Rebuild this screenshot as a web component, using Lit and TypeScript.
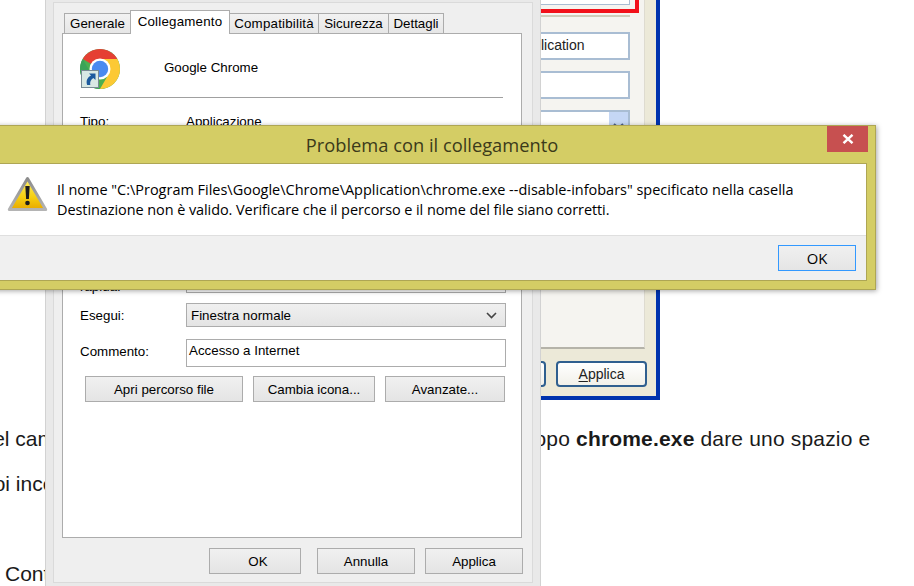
import { LitElement, html, css } from "lit";
import { customElement } from "lit/decorators.js";

@customElement("app-root")
export class AppRoot extends LitElement {
  static styles = css`
    :host { display: block; position: relative; width: 914px; height: 586px; overflow: hidden; background: #fff; font-family: "Liberation Sans", Arial, sans-serif; color: #000; }
    * { box-sizing: border-box; }

    /* article text behind the windows */
    .article { position: absolute; left: 0; top: 0; width: 914px; height: 586px; font-size: 21px; color: #1a1a1a; white-space: nowrap; }
    .line { position: absolute; line-height: 24px; }
    .l1 { left: -22px; top: 427px; }
    .l1b { left: 534.5px; top: 427px; letter-spacing: 0.17px; }
    .l2 { left: -18px; top: 472px; }
    .l3 { left: 5px; top: 562px; }

    /* old XP-style window */
    .xp { position: absolute; left: 400px; top: -20px; width: 260px; height: 420px; background: #ece9d8; border-right: 4px solid #0033ad; border-bottom: 4px solid #0033ad; display: flex; flex-direction: column; align-items: flex-end; padding-right: 11px; }
    .xp-panel { width: 245px; height: 369px; background: #f5f4f0; border-right: 1px solid #dedbd0; border-bottom: 2px solid #b5b3a9; padding-right: 14px; display: flex; flex-direction: column; align-items: flex-end; position: relative; font-size: 14px; color: #222; }
    .xp-top { width: 100%; height: 25px; border: 1px solid #a9bdd3; border-top: 0; background: #fff; }
    .xp-red { position: absolute; right: 5px; top: 0; width: 130px; height: 33px; border-right: 4px solid #f2101a; border-bottom: 4px solid #f2101a; }
    .xp-sep { width: 100%; height: 2px; background: #cfccbb; margin-top: 10px; }
    .xp-field { width: 100%; height: 28px; border: 2px solid #a9bdd3; background: #fff; display: flex; align-items: center; flex: none; }
    .xp-f1 { margin-top: 15px; padding-left: 114px; padding-bottom: 2px; }
    .xp-f2 { margin-top: 11px; }
    .xp-f3 { margin-top: 11px; justify-content: flex-end; align-items: flex-start; }
    .xp-drop { width: 19px; height: 18px; background: #c5d7f5; display: flex; align-items: flex-end; justify-content: center; }
    .xp-row { width: 260px; display: flex; justify-content: flex-end; gap: 10px; margin-top: 12px; align-self: flex-end; margin-right: -2px; }
    .xp-btn { width: 91px; height: 26px; border: 2px solid #2f5f8f; border-radius: 4px; background: linear-gradient(#fff, #f2f1ea); font: 14px "Liberation Sans", Arial, sans-serif; color: #222; display: flex; align-items: center; justify-content: center; flex: none; }
    .xp-btn u { text-underline-offset: 2px; }

    /* properties window */
    .props { position: absolute; left: 45px; top: -6px; width: 496px; height: 600px; background: #e9e9e9; border-left: 1px solid #d2d2d2; border-right: 1px solid #d2d2d2; padding: 8px 7px; }
    .props-in { width: 480px; height: 581px; background: #efefef; border: 1px solid #dadada; padding: 7px 8px 0 8px; display: flex; flex-direction: column; font-size: 13.33px; }
    .tabs { display: flex; align-items: flex-end; height: 24px; padding-left: 2px; position: relative; z-index: 1; }
    .tab { height: 21px; border: 1px solid #acacac; background: linear-gradient(#f2f2f2, #e6e6e6); display: flex; align-items: center; justify-content: center; margin-right: -1px; }
    .tab.on { height: 24px; background: #fff; border-bottom: 0; padding-bottom: 3px; position: relative; }
    .t1 { width: 67px; } .t2 { width: 100px; letter-spacing: .2px; } .t3 { width: 90px; letter-spacing: .2px; } .t4 { width: 71px; } .t5 { width: 56px; }
    .panel { width: 460px; height: 505px; margin-top: -1px; background: #fff; border: 1px solid #acacac; padding: 15px 0 0 17px; flex: none; }
    .head { display: flex; align-items: center; gap: 44px; height: 40px; }
    .head svg { display: block; flex: none; }
    .head span { margin-top: -4px; }
    .sep { width: 423px; height: 1px; background: #a0a0a0; margin-top: 8px; }
    .row { display: flex; align-items: center; }
    .label { width: 106px; flex: none; }
    .r-tipo { margin-top: 15px; height: 16px; }
    .r-rap { margin-top: 139px; height: 25px; align-items: flex-end; }
    .r-rap .label { line-height: 16px; margin-bottom: -2px; }
    .r-ese { margin-top: 10px; height: 24px; }
    .r-com { margin-top: 12px; height: 28px; }
    .r-com .label { margin-top: -4px; }
    .input { width: 320px; height: 100%; border: 1px solid #acacac; background: #fff; }
    .input.com { padding: 3px 2px; line-height: 16px; }
    .select { width: 320px; height: 100%; border: 1px solid #acacac; background: linear-gradient(#f0f0f0, #e4e4e4); padding: 0 8px 0 4px; display: flex; align-items: center; justify-content: space-between; }
    .actions { display: flex; margin-top: 9px; margin-left: 5px; gap: 10px; }
    .btn { height: 26px; border: 1px solid #acacac; background: linear-gradient(#f0f0f0, #e4e4e4); display: flex; align-items: center; justify-content: center; flex: none; }
    .a1 { width: 158px; } .a2 { width: 122px; } .a3 { width: 120px; }
    .foot { display: flex; margin-top: 10px; margin-left: 147px; }
    .f1 { width: 92px; margin-right: 16px; padding-left: 6px; } .f2 { width: 98px; margin-right: 10px; } .f3 { width: 98px; }

    /* error dialog */
    .dlg { position: absolute; left: -10px; top: 125px; width: 886px; height: 165px; background: #d4cd65; border: 1px solid #aea654; box-shadow: 1px 1px 5px rgba(0,0,0,.35); padding: 0 8px 8px 0; display: flex; flex-direction: column; font-family: "Open Sans", "Noto Sans", sans-serif; }
    .title { height: 37px; flex: none; display: flex; align-items: center; justify-content: center; font-size: 18.3px; color: #3b3a1a; position: relative; }
    .title span { margin-left: 6px; }
    .close { position: absolute; right: -1px; top: 0; width: 41px; height: 26px; background: #c75050; display: flex; align-items: center; justify-content: center; }
    .client { flex: 1; border: 1px solid #aea654; border-left: 0; display: flex; flex-direction: column; background: #fff; }
    .msg { height: 71px; flex: none; background: #fff; display: flex; align-items: flex-start; padding: 12px 0 0 16px; gap: 9px; font-size: 14.48px; line-height: 20px; color: #000; }
    .msg svg { flex: none; margin-top: 0; }
    .msg-text { white-space: nowrap; padding-top: 4px; }
    .tight { letter-spacing: -0.07px; }
    .bar { flex: 1; background: #f0f0f0; border-top: 1px solid #dfdfdf; display: flex; justify-content: flex-end; align-items: flex-start; padding: 9px 10px 0 0; }
    .ok { width: 78px; height: 26px; border: 1px solid #3399ff; background: linear-gradient(#f0f0f0, #e5e5e5); display: flex; align-items: center; justify-content: center; font-size: 14.8px; }
  `;

  private chrome() {
    return html`<svg width="40" height="40" viewBox="0 0 40 40">
      <circle cx="20" cy="20" r="20" fill="#4caf50"/>
      <path d="M20 20 L2.7 10 A20 20 0 0 1 37.3 10 Z" fill="#e53f33"/>
      <path d="M37.3 10 L20 10 L28.7 25 L20 40 A20 20 0 0 0 37.3 10Z" fill="#fcc934"/>
      <path d="M2.7 10 L11.3 25 L20 40 A20 20 0 0 1 2.7 10Z" fill="#3ba358"/>
      <circle cx="20" cy="20" r="10.5" fill="#fff"/>
      <circle cx="20" cy="20" r="8.2" fill="#4a8af0"/>
      <rect x="1.5" y="21.5" width="17" height="17" fill="#d8e8e4" stroke="#788a94" stroke-width="1"/>
      <path d="M15.500 24.500 L15.500 31 L13.300 28.900 C10.500 30.800 9.800 33 10.300 36 L7.200 36 C5.600 32 7.500 28.300 11 26.600 L9 24.500 Z" fill="#1c5a9e"/>
    </svg>`;
  }

  private warning() {
    return html`<svg width="41" height="36" viewBox="0 0 41 36">
      <defs>
        <linearGradient id="wg" x1="0" y1="0" x2="0" y2="1">
          <stop offset="0" stop-color="#fdf06a"/><stop offset=".6" stop-color="#f6cf10"/><stop offset="1" stop-color="#e8a800"/>
        </linearGradient>
        <linearGradient id="ws" x1="0" y1="0" x2="0" y2="1">
          <stop offset="0" stop-color="#8c8c8c"/><stop offset="1" stop-color="#b4b4b4"/>
        </linearGradient>
      </defs>
      <path d="M20.500 2.500 L38.700 33.600 L2.300 33.600 Z" fill="url(#wg)" stroke="url(#ws)" stroke-width="3" stroke-linejoin="round"/>
      <path d="M18.300 10 L22.700 10 L21.900 23 L19.100 23 Z" fill="#1c1c1c"/>
      <circle cx="20.500" cy="27" r="2.300" fill="#1c1c1c"/>
    </svg>`;
  }

  render() {
    return html`
      <div class="article">
        <div class="line l1">Nel cam</div>
        <div class="line l1b">opo <b>chrome.exe</b> dare uno spazio e</div>
        <div class="line l2">poi inco</div>
        <div class="line l3">Cont</div>
      </div>

      <div class="xp">
        <div class="xp-panel">
          <div class="xp-top"></div>
          <div class="xp-red"></div>
          <div class="xp-sep"></div>
          <div class="xp-field xp-f1">Application</div>
          <div class="xp-field xp-f2"></div>
          <div class="xp-field xp-f3">
            <div class="xp-drop">
              <svg width="11" height="7" viewBox="0 0 11 7"><path d="M1 1 L5.500 5 L10 1" fill="none" stroke="#4d6185" stroke-width="2"/></svg>
            </div>
          </div>
        </div>
        <div class="xp-row">
          <div class="xp-btn"></div>
          <div class="xp-btn"><span><u>A</u>pplica</span></div>
        </div>
      </div>

      <div class="props">
        <div class="props-in">
          <div class="tabs">
            <div class="tab t1">Generale</div>
            <div class="tab on t2">Collegamento</div>
            <div class="tab t3">Compatibilità</div>
            <div class="tab t4">Sicurezza</div>
            <div class="tab t5">Dettagli</div>
          </div>
          <div class="panel">
            <div class="head">${this.chrome()}<span>Google Chrome</span></div>
            <div class="sep"></div>
            <div class="row r-tipo"><span class="label">Tipo:</span><span>Applicazione</span></div>
            <div class="row r-rap"><span class="label">rapida:</span><div class="input"></div></div>
            <div class="row r-ese">
              <span class="label">Esegui:</span>
              <div class="select"><span>Finestra normale</span>
                <svg width="11" height="7" viewBox="0 0 11 7"><path d="M1 1 L5.500 5.500 L10 1" fill="none" stroke="#444" stroke-width="1.600"/></svg>
              </div>
            </div>
            <div class="row r-com"><span class="label">Commento:</span><div class="input com">Accesso a Internet</div></div>
            <div class="actions">
              <div class="btn a1">Apri percorso file</div>
              <div class="btn a2">Cambia icona...</div>
              <div class="btn a3">Avanzate...</div>
            </div>
          </div>
          <div class="foot">
            <div class="btn f1">OK</div>
            <div class="btn f2">Annulla</div>
            <div class="btn f3">Applica</div>
          </div>
        </div>
      </div>

      <div class="dlg">
        <div class="title"><span>Problema con il collegamento</span>
          <div class="close">
            <svg width="12" height="10" viewBox="0 0 12 10"><path d="M1.500 0.800 L10.500 9.200 M10.500 0.800 L1.500 9.200" stroke="#fff" stroke-width="2.400"/></svg>
          </div>
        </div>
        <div class="client">
          <div class="msg">
            ${this.warning()}
            <div class="msg-text">Il nome "C:\\Program Files\\Google\\Chrome\\Application\\chrome.exe --disable-infobars" specificato nella casella<br><span class="tight">Destinazione non è valido. Verificare che il percorso e il nome del file siano corretti.</span></div>
          </div>
          <div class="bar"><div class="ok">OK</div></div>
        </div>
      </div>
    `;
  }
}
